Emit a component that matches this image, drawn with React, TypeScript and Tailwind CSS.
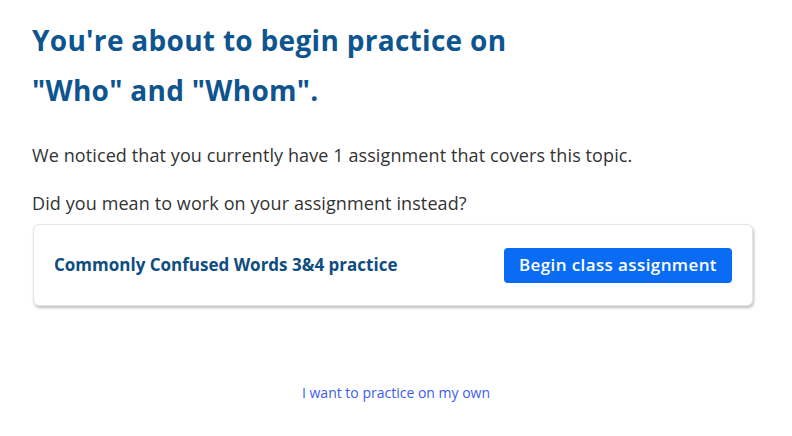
export default function App() {
  return (
    <div
      className="w-[792px] h-[436px] bg-white flex flex-col"
      style={{ fontFamily: '"Open Sans", Lato, sans-serif' }}
    >
      <div className="pl-[32px] pr-[40px] pt-[15px]">
        <h1 className="text-[28px] leading-[50px] font-bold tracking-[0.3px] text-[#0e558f]">
          You're about to begin practice on
          <br />
          "Who" and "Whom".
        </h1>
        <p className="mt-[26px] text-[18px] leading-[28px] tracking-[0.1px] text-[#333333]">
          We noticed that you currently have 1 assignment that covers this topic.
        </p>
        <p className="mt-[20px] text-[18px] leading-[28px] tracking-[0.1px] text-[#333333]">
          Did you mean to work on your assignment instead?
        </p>
        <div className="mt-[7px] w-[720px] h-[82px] ml-[1px] rounded-[6px] border border-[#e6e6e6] bg-white shadow-[1px_2px_3px_rgba(0,0,0,0.25)] flex items-center justify-between pl-[20px] pr-[20px]">
          <span className="text-[17px] font-bold text-[#0e4d80]">
            Commonly Confused Words 3&amp;4 practice
          </span>
          <button className="h-[35px] px-[15px] rounded-[4px] bg-[#0a6cf5] text-white text-[17px] font-semibold tracking-[0.4px]">
            Begin class assignment
          </button>
        </div>
      </div>
      <div className="mt-[76px] flex justify-center">
        <a className="text-[14px] text-[#3a5cf5] cursor-pointer">I want to practice on my own</a>
      </div>
    </div>
  )
}
